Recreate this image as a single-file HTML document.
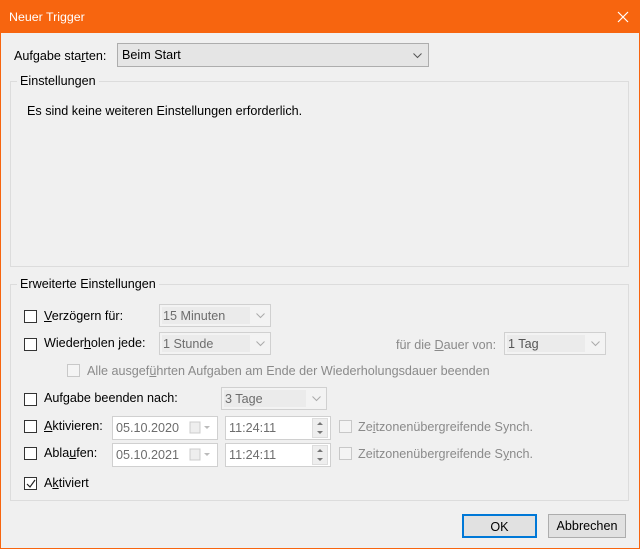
<!DOCTYPE html>
<html><head><meta charset="utf-8"><style>
*{box-sizing:border-box;margin:0;padding:0}
body{width:640px;height:549px;overflow:hidden;background:#f0f0f0;font-family:"Liberation Sans",sans-serif;font-size:12.6px;color:#000;position:relative}
.a{position:absolute;white-space:nowrap}
.title{left:0;top:0;width:640px;height:33px;background:#f7650f}
.frame{left:0;top:33px;width:640px;height:516px;border-left:1px solid #f7650f;border-right:1px solid #f7650f;border-bottom:1px solid #f7650f}
.grp{border:1px solid #dcdcdc}
.lbl{background:#f0f0f0;padding:0 3px}
.cb{width:13px;height:13px;border:1px solid #333;background:#fff}
.cbd{width:13px;height:13px;border:1px solid #c8c8c8;background:#f4f4f4}
.combo{border:1px solid #d0d0d0;background:#f3f3f3;color:#6d6d6d;padding:3px 0 0 3px;height:23px}
.combo .in{position:absolute;left:2px;top:2px;right:20px;bottom:2px;background:#ebebeb;padding:2px 0 0 1px}
.combo svg{position:absolute;right:5px;top:8px}
.box{border:1px solid #d0d0d0;background:#fff;color:#6d6d6d;height:24px;padding:4px 0 0 3px}
.dis{color:#8a8a8a}
u{text-decoration:underline}
.btn{border:1px solid #adadad;background:#e1e1e1;text-align:center;height:24px;padding-top:4px}
</style></head><body>
<div class="a title"></div>
<div class="a" style="left:9px;top:10px;color:#fff;font-size:12.4px">Neuer Trigger</div>
<svg class="a" style="left:617px;top:11px" width="12" height="12"><path d="M1 1L11 11M11 1L1 11" stroke="#fff" stroke-width="1.2"/></svg>
<div class="a frame"></div>

<div class="a" style="left:14px;top:49px">Aufgabe sta<u>r</u>ten:</div>
<div class="a" style="left:117px;top:43px;width:312px;height:24px;border:1px solid #adadad;background:#e5e5e5;padding:4px 0 0 4px">Beim Start
<svg style="position:absolute;right:6px;top:9px" width="9" height="6"><path d="M0.5 0.5L4.5 4.5L8.5 0.5" stroke="#555" fill="none"/></svg></div>

<div class="a grp" style="left:10px;top:81px;width:619px;height:186px"></div>
<div class="a lbl" style="left:17px;top:74px">Einstellungen</div>
<div class="a" style="left:27px;top:104px">Es sind keine weiteren Einstellungen erforderlich.</div>

<div class="a grp" style="left:10px;top:284px;width:619px;height:217px"></div>
<div class="a lbl" style="left:17px;top:277px">Erweiterte Einstellungen</div>

<div class="a cb" style="left:24px;top:310px"></div>
<div class="a" style="left:44px;top:309px"><u>V</u>erzögern für:</div>
<div class="a combo" style="left:159px;top:304px;width:112px"><div class="in">15 Minuten</div><svg width="9" height="6"><path d="M0.5 0.5L4.5 4.5L8.5 0.5" stroke="#aaa" fill="none"/></svg></div>

<div class="a cb" style="left:24px;top:338px"></div>
<div class="a" style="left:44px;top:336px">Wieder<u>h</u>olen jede:</div>
<div class="a combo" style="left:159px;top:332px;width:112px"><div class="in">1 Stunde</div><svg width="9" height="6"><path d="M0.5 0.5L4.5 4.5L8.5 0.5" stroke="#aaa" fill="none"/></svg></div>
<div class="a dis" style="left:396px;top:338px">für die <u>D</u>auer von:</div>
<div class="a combo" style="left:504px;top:332px;width:102px;color:#555"><div class="in">1 Tag</div><svg width="9" height="6"><path d="M0.5 0.5L4.5 4.5L8.5 0.5" stroke="#aaa" fill="none"/></svg></div>

<div class="a cbd" style="left:67px;top:364px"></div>
<div class="a dis" style="left:87px;top:364px">Alle ausgef<u>ü</u>hrten Aufgaben am Ende der Wiederholungsdauer beenden</div>

<div class="a cb" style="left:24px;top:393px"></div>
<div class="a" style="left:44px;top:391px">Auf<u>g</u>abe beenden nach:</div>
<div class="a combo" style="left:221px;top:387px;width:106px"><div class="in">3 Tage</div><svg width="9" height="6"><path d="M0.5 0.5L4.5 4.5L8.5 0.5" stroke="#aaa" fill="none"/></svg></div>

<div class="a cb" style="left:24px;top:420px"></div>
<div class="a" style="left:44px;top:419px"><u>A</u>ktivieren:</div>
<div class="a cb" style="left:24px;top:447px"></div>
<div class="a" style="left:44px;top:446px">Abla<u>u</u>fen:</div>

<div class="a box" style="left:112px;top:416px;width:106px">05.10.2020</div>
<div class="a box" style="left:112px;top:443px;width:106px">05.10.2021</div>
<div class="a box" style="left:225px;top:416px;width:106px">11:24:11</div>
<div class="a box" style="left:225px;top:443px;width:106px">11:24:11</div>
<svg class="a" style="left:189px;top:421px" width="26" height="14"><rect x="1" y="1" width="10" height="11" fill="#eee" stroke="#ccc"/><path d="M15 5L18 8L21 5Z" fill="#bbb"/></svg>
<svg class="a" style="left:189px;top:448px" width="26" height="14"><rect x="1" y="1" width="10" height="11" fill="#eee" stroke="#ccc"/><path d="M15 5L18 8L21 5Z" fill="#bbb"/></svg>
<svg class="a" style="left:312px;top:418px" width="16" height="20"><rect x="0.5" y="0.5" width="15" height="19" fill="#eee" stroke="#ddd"/><path d="M5 7L8 4L11 7Z M5 13L8 16L11 13Z" fill="#777"/></svg>
<svg class="a" style="left:312px;top:445px" width="16" height="20"><rect x="0.5" y="0.5" width="15" height="19" fill="#eee" stroke="#ddd"/><path d="M5 7L8 4L11 7Z M5 13L8 16L11 13Z" fill="#777"/></svg>
<div class="a cbd" style="left:339px;top:420px"></div>
<div class="a dis" style="left:358px;top:420px">Ze<u>i</u>tzonenübergreifende Synch.</div>
<div class="a cbd" style="left:339px;top:447px"></div>
<div class="a dis" style="left:358px;top:447px">Zeitzonenübergreifende S<u>y</u>nch.</div>

<div class="a cb" style="left:24px;top:477px"><svg style="position:absolute;left:1px;top:1px" width="10" height="10"><path d="M1 5L4 8L9 1" stroke="#222" stroke-width="1.2" fill="none"/></svg></div>
<div class="a" style="left:44px;top:476px">A<u>k</u>tiviert</div>

<div class="a btn" style="left:462px;top:514px;width:75px;border:2px solid #0078d7">OK</div>
<div class="a btn" style="left:548px;top:514px;width:78px">Abbrechen</div>
</body></html>
